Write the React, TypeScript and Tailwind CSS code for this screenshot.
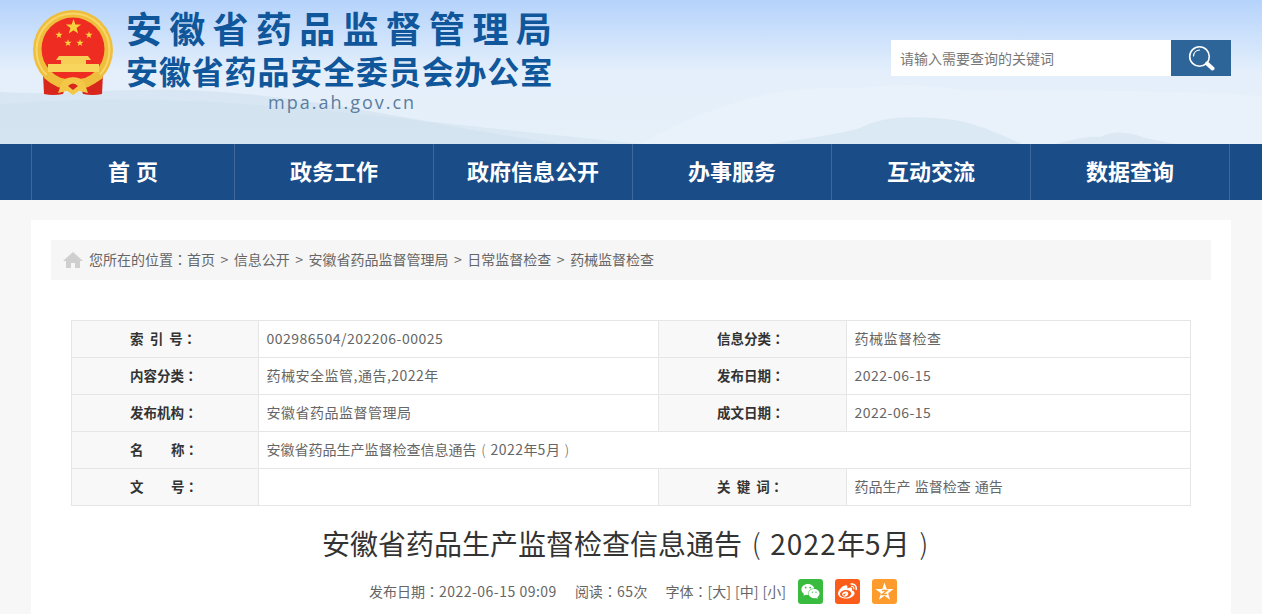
import React from "react";
import { FaWeixin, FaWeibo } from "react-icons/fa";

const P = ({ c }: { c: string }) => (
  <span className="font-['Noto_Sans_CJK_TC',sans-serif]">{c}</span>
);
const Paren = ({ c }: { c: string }) => <span className="inline-block w-[1em] text-center font-light">{c}</span>;
const N = ({ c }: { c: React.ReactNode }) => <span className="tracking-[0.5px]">{c}</span>;

const star = (cx: number, cy: number, r: number) => {
  const pts: string[] = [];
  for (let i = 0; i < 10; i++) {
    const a = (Math.PI / 5) * i - Math.PI / 2;
    const rr = i % 2 === 0 ? r : r * 0.4;
    pts.push(`${(cx + rr * Math.cos(a)).toFixed(2)},${(cy + rr * Math.sin(a)).toFixed(2)}`);
  }
  return pts.join(" ");
};

function Emblem() {
  return (
    <svg width="80" height="86" viewBox="0 0 80 86" className="shrink-0">
      <path d="M14 54 L10 64 L11 84 Q20 86 30 84 L34 72 Z" fill="#d8261c" />
      <path d="M66 54 L70 64 L69 84 Q60 86 50 84 L46 72 Z" fill="#d8261c" />
      <circle cx="40" cy="40" r="40" fill="#efbe3c" />
      <circle cx="40" cy="40" r="36.5" fill="none" stroke="#f8d667" strokeWidth="2" />
      <circle cx="40" cy="39" r="31.5" fill="#ee2c22" />
      <polygon points={star(40.5, 17, 8)} fill="#f8d23c" />
      <polygon points={star(26, 25, 3.8)} fill="#f8d23c" />
      <polygon points={star(56, 25, 3.8)} fill="#f8d23c" />
      <polygon points={star(35, 33, 3.8)} fill="#f8d23c" />
      <polygon points={star(47, 33, 3.8)} fill="#f8d23c" />
      <path d="M26 46 L55 46 L58 50 L53 50 L53 54 L28 54 L28 50 L23 50 Z" fill="#f6cf56" />
      <rect x="15" y="54" width="51" height="8" fill="#f8d65e" />
      <path d="M16 62 Q28 72 40 67 Q52 72 65 62 L70 68 Q54 80 40 73 Q26 80 11 68 Z" fill="#efbe3c" />
      <path d="M29 72 Q35 66 40 68 Q45 66 51 72 L55 83 L46 81 L40 85 L34 81 L25 83 Z" fill="#f3c748" />
      <path d="M35 76 Q40 71 45 76 L40 80 Z" fill="#d8261c" />
    </svg>
  );
}

const rows = [
  ["索  引  号：", "002986504/202206-00025", "信息分类：", "药械监督检查"],
  ["内容分类：", "药械安全监管,通告,2022年", "发布日期：", "2022-06-15"],
  ["发布机构：", "安徽省药品监督管理局", "成文日期：", "2022-06-15"],
];

const Label = ({ t }: { t: string }) => {
  const body = t.slice(0, -1);
  return (
    <span className="whitespace-pre">
      {body}
      <P c="：" />
    </span>
  );
};

const th = "border border-[#e6e6e6] bg-[#f8f8f8] text-left pl-[58px] pb-[2px] font-bold text-[13.5px] text-[#333]";
const td = "border border-[#e6e6e6] pl-[7.5px] pb-[2px] text-[#666]";

export default function App() {
  return (
    <div className="h-[614px] overflow-hidden bg-[#f7f7f7] flex flex-col font-['Noto_Sans_CJK_SC','Noto_Sans_CJK_TC',sans-serif]">
      <header className="relative h-[144px] shrink-0 overflow-hidden bg-gradient-to-b from-[#b5d3fb] via-[#e4effb] to-[#e6f0f9]">
        <svg className="absolute inset-0" width="1262" height="144" viewBox="0 0 1262 144" preserveAspectRatio="none">
          <path d="M0 92 C60 96 110 88 180 90 C260 92 330 104 420 120 C470 130 520 138 560 144 L0 144 Z" fill="#d3e3f0" opacity="0.7" />
          <path d="M0 104 C120 96 220 100 340 112 C420 120 520 132 640 144 L0 144 Z" fill="#cfe0ee" opacity="0.45" />
          <path d="M640 144 C700 112 760 84 860 88 C900 84 920 84 960 90 C1040 92 1160 88 1262 96 L1262 144 Z" fill="#eaf2fa" opacity="0.8" />
          <path d="M770 144 C810 138 840 134 860 128 C880 118 900 116 935 118 C970 120 990 130 1022 144 Z" fill="#d6e5f1" opacity="0.75" />
          <path d="M1055 144 C1080 138 1090 136 1100 137 C1115 130 1130 132 1145 138 C1155 140 1165 142 1175 144 Z" fill="#d6e5f1" opacity="0.7" />
        </svg>
        <div className="relative flex h-full px-[31px]">
          <div className="flex-none mt-[10px] ml-[2px]">
            <Emblem />
          </div>
          <div className="ml-[13px] flex flex-col">
            <div className="mt-[3px] h-[48px] leading-[48px] text-[36px] font-bold tracking-[7.3px] text-[#10569a] whitespace-nowrap">
              安徽省药品监督管理局
            </div>
            <div className="mt-[-3px] h-[44px] leading-[44px] text-[32px] font-bold tracking-[0.85px] text-[#10569a] whitespace-nowrap">
              安徽省药品安全委员会办公室
            </div>
            <div className="mt-[-3px] ml-[142px] text-[18px] leading-[26px] tracking-[2px] text-[#5a7d9e] font-['Open_Sans',sans-serif]">
              mpa.ah.gov.cn
            </div>
          </div>
          <div className="ml-auto mt-[40px] flex h-[36px]">
            <input
              className="w-[280px] h-[36px] bg-white pl-[9px] text-[14px] outline-none placeholder:text-[#777]"
              placeholder="请输入需要查询的关键词"
            />
            <button className="w-[60px] h-[36px] bg-[#2e6599] flex items-center justify-center">
              <svg width="27" height="27" viewBox="0 0 27 27" fill="none">
                <circle cx="11.5" cy="11.5" r="9.8" stroke="#fff" strokeWidth="1.6" />
                <path d="M5.5 11 A6.5 6.5 0 0 1 11.5 5" stroke="#fff" strokeWidth="1.2" strokeLinecap="round" />
                <path d="M19 18.5 L24.5 23.5" stroke="#fff" strokeWidth="4" strokeLinecap="round" />
              </svg>
            </button>
          </div>
        </div>
      </header>

      <nav className="h-[56px] shrink-0 bg-[#1a4c88] pl-[31px] flex text-white text-[22px] font-bold">
        <a className="w-[203px] pb-[3px] border-l border-[#40689b] flex items-center justify-center">
          <span className="mr-[6px]">首</span>页
        </a>
        {["政务工作", "政府信息公开", "办事服务", "互动交流", "数据查询"].map((t) => (
          <a key={t} className="w-[199px] pb-[3px] border-l border-[#40689b] flex items-center justify-center">
            {t}
          </a>
        ))}
        <span className="border-l border-[#40689b]" />
      </nav>

      <main className="mx-[31px] mt-[20px] flex-1 bg-white px-[20px] pt-[20px]">
        <div className="h-[40px] pb-[1px] bg-[#f6f6f6] flex items-center pl-[12px] text-[14px] text-[#666]">
          <svg width="20" height="18" viewBox="0 0 20 18" className="mr-[6px] shrink-0">
            <path d="M10 1 L20 10 L17 10 L17 17 L12 17 L12 12 L8 12 L8 17 L3 17 L3 10 L0 10 Z" fill="#cfcfcf" />
          </svg>
          <span>您所在的位置</span>
          <P c="：" />
          <span>首页</span>
          <span className="mx-[5.5px]">&gt;</span>
          <span>信息公开</span>
          <span className="mx-[5.5px]">&gt;</span>
          <span>安徽省药品监督管理局</span>
          <span className="mx-[5.5px]">&gt;</span>
          <span>日常监督检查</span>
          <span className="mx-[5.5px]">&gt;</span>
          <span>药械监督检查</span>
        </div>

        <table className="mx-[20px] mt-[40px] w-[1119px] table-fixed border-collapse text-[14px]">
          <colgroup>
            <col className="w-[187px]" />
            <col className="w-[400px]" />
            <col className="w-[188px]" />
            <col className="w-[344px]" />
          </colgroup>
          <tbody>
            {rows.map((r, i) => (
              <tr key={i} className="h-[37px]">
                <th className={th}>
                  <Label t={r[0]} />
                </th>
                <td className={td}>
                  <N c={r[1]} />
                </td>
                <th className={th}>
                  <Label t={r[2]} />
                </th>
                <td className={td}>
                  <N c={r[3]} />
                </td>
              </tr>
            ))}
            <tr className="h-[37px]">
              <th className={th}>
                <Label t="名         称：" />
              </th>
              <td className={td} colSpan={3}>
                安徽省药品生产监督检查信息通告
                <Paren c="(" />
                <N c="2022" />年<N c="5" />月
                <Paren c=")" />
              </td>
            </tr>
            <tr className="h-[37px]">
              <th className={th}>
                <Label t="文         号：" />
              </th>
              <td className={td}></td>
              <th className={th}>
                <Label t="关  键  词：" />
              </th>
              <td className={`${td} [word-spacing:1px]`}>药品生产 监督检查 通告</td>
            </tr>
          </tbody>
        </table>

        <h1 className="mt-[17px] pr-[2px] text-center text-[28px] leading-[40px] text-[#333] font-normal">
          安徽省药品生产监督检查信息通告
          <Paren c="(" />
          <span className="tracking-[1.2px]">2022</span>年<span className="tracking-[1.2px]">5</span>月
          <Paren c=")" />
        </h1>

        <div className="mt-[16px] pl-[4px] flex items-center justify-center text-[14px] text-[#666] h-[25px]">
          <span>
            发布日期
            <P c="：" />
            <N c="2022-06-15 09:09" />
          </span>
          <span className="ml-[18px]">
            阅读
            <P c="：" />
            <N c="65" />次
          </span>
          <span className="ml-[18px] whitespace-pre [word-spacing:1px]">
            字体
            <P c="：" />
            [大] [中] [小]
          </span>
          <span className="ml-[12px] w-[25px] h-[25px] rounded-[3px] bg-[#38bb3f] flex items-center justify-center text-white text-[19px]">
            <FaWeixin />
          </span>
          <span className="ml-[12px] w-[25px] h-[25px] rounded-[3px] bg-[#fb5c19] flex items-center justify-center text-white text-[19px]">
            <FaWeibo />
          </span>
          <span className="ml-[12px] w-[25px] h-[25px] rounded-[3px] bg-[#fd9b2d] flex items-center justify-center">
            <svg width="19" height="19" viewBox="0 0 19 19">
              <polygon points={star(9.5, 10, 9.5)} fill="#fff" />
              <path d="M7 8.5 H12 L7 12.5 H12" stroke="#fd9b2d" strokeWidth="1.4" fill="none" />
            </svg>
          </span>
        </div>
      </main>
    </div>
  );
}
